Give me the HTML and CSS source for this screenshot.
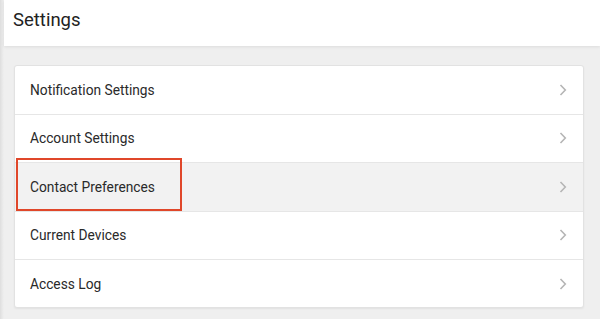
FILE: index.html
```html
<!DOCTYPE html>
<html>
<head>
<meta charset="utf-8">
<link rel="stylesheet" href="styles.css">
</head>
<body>
<div class="page">
  <div class="edge"></div>
  <div class="main">
    <header class="header"><h1 class="title">Settings</h1></header>
    <div class="content">
      <ul class="card">
        <li class="row"><span class="label">Notification Settings</span><svg class="chev" viewBox="0 0 8 12" width="8" height="12"><path d="M1.5 1 L6.3 6 L1.5 11" fill="none" stroke="#b5b5b5" stroke-width="1.6"/></svg></li>
        <li class="row"><span class="label">Account Settings</span><svg class="chev" viewBox="0 0 8 12" width="8" height="12"><path d="M1.5 1 L6.3 6 L1.5 11" fill="none" stroke="#b5b5b5" stroke-width="1.6"/></svg></li>
        <li class="row active"><span class="label">Contact Preferences</span><span class="highlight"></span><svg class="chev" viewBox="0 0 8 12" width="8" height="12"><path d="M1.5 1 L6.3 6 L1.5 11" fill="none" stroke="#b5b5b5" stroke-width="1.6"/></svg></li>
        <li class="row"><span class="label">Current Devices</span><svg class="chev" viewBox="0 0 8 12" width="8" height="12"><path d="M1.5 1 L6.3 6 L1.5 11" fill="none" stroke="#b5b5b5" stroke-width="1.6"/></svg></li>
        <li class="row"><span class="label">Access Log</span><svg class="chev" viewBox="0 0 8 12" width="8" height="12"><path d="M1.5 1 L6.3 6 L1.5 11" fill="none" stroke="#b5b5b5" stroke-width="1.6"/></svg></li>
      </ul>
    </div>
  </div>
</div>
</body>
</html>
```

FILE: styles.css
```css
* { box-sizing: border-box; }
html, body { margin: 0; padding: 0; }
body {
  font-family: Roboto, "Liberation Sans", Arial, sans-serif;
  background: #efefef;
  width: 600px;
  height: 319px;
  overflow: hidden;
}
.page {
  display: flex;
  height: 319px;
}
.edge {
  width: 4px;
  flex: none;
  background: linear-gradient(to right, #dedede, #e9e9e9 60%, #efefef);
}
.main {
  flex: 1;
  display: flex;
  flex-direction: column;
}
.header {
  height: 46px;
  background: #fff;
  box-shadow: 0 1px 3px rgba(0,0,0,0.08);
  padding: 0 0 0 9px;
  position: relative;
  z-index: 1;
}
.title {
  margin: 0;
  font-weight: 400;
  font-size: 18.5px;
  line-height: 40px;
  color: #222;
}
.content {
  padding: 19px 16px 0 10px;
}
.card {
  list-style: none;
  margin: 0;
  padding: 0;
  background: #fff;
  border: 1px solid #e2e2e2;
  border-radius: 3px;
  box-shadow: 0 1px 2px rgba(0,0,0,0.06);
  overflow: hidden;
}
.row {
  position: relative;
  display: flex;
  align-items: center;
  justify-content: space-between;
  height: 48.5px;
  padding: 0 16px 0 15px;
  border-bottom: 1px solid #e6e6e6;
}
.row:last-child { border-bottom: none; height: 47px; }
.row.active { background: #f2f2f2; }
.label {
  font-size: 13.75px;
  color: #2a2a2a;
}
.chev { display: block; }
.highlight {
  position: absolute;
  left: 1px;
  top: -5px;
  width: 166px;
  height: 53px;
  border: 2px solid #e0472a;
}
```
